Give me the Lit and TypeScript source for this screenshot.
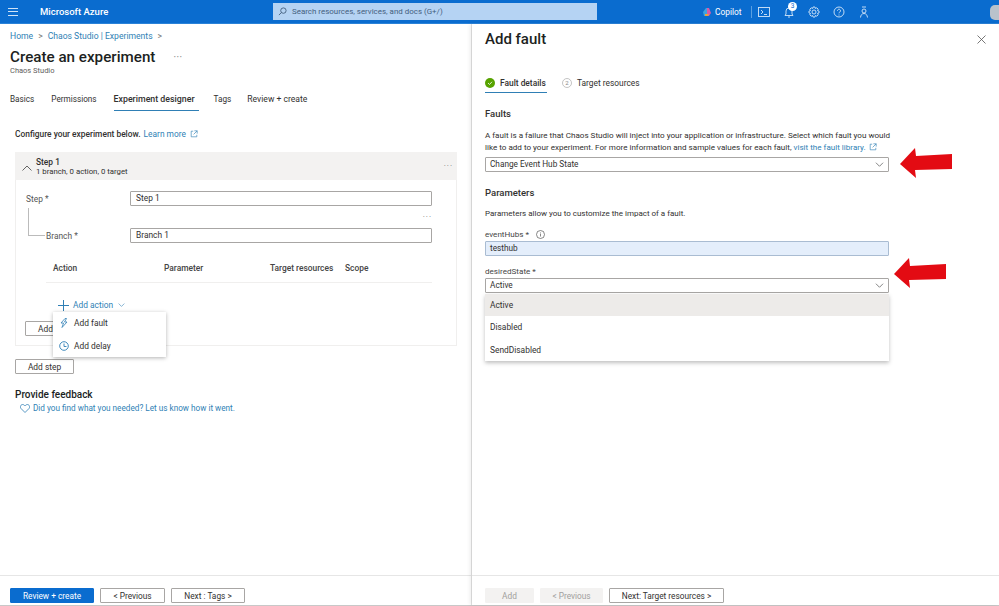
import { LitElement, html, css, svg } from "lit";
import { customElement } from "lit/decorators.js";

const ext = html`<svg class="ext" viewBox="0 0 10 10" fill="none" stroke="#2f7fb5" stroke-width=".8"><path d="M4 1.5H1.5v7h7V6M5.5 1h3.5v3.500M9 1 4.500 5.500"/></svg>`;
const chev = html`<svg class="chev" viewBox="0 0 12 7" fill="none" stroke="#555" stroke-width="1"><path d="M1 1l5 5 5-5"/></svg>`;
const arrow = svg`<path d="M0 16 15 0l1 8 36-2v15l-37 1 1 8z" fill="#e30b13"/>`;

@customElement("app-root")
export class AppRoot extends LitElement {
  static styles = css`
    :host { display: block; width: 999px; height: 606px; overflow: hidden; position: relative; background: #fff;
      font-family: Roboto, "Noto Sans", sans-serif; font-size: 8.4px; color: #323130; }
    * { box-sizing: border-box; }
    .top { height: 24px; background: #0a6ccf; border-bottom: 1px solid #2a82d8; display: flex; align-items: center; color: #fff; }
    .burger { width: 10px; height: 8px; margin-left: 8px; border-top: 1px solid #cfe3f7; border-bottom: 1px solid #cfe3f7; position: relative; }
    .burger i { display: block; height: 1px; background: #cfe3f7; margin-top: 2.500px; }
    .brand { margin-left: 22px; width: 233px; font-size: 9.5px; font-weight: 500; }
    .search { width: 324px; height: 17px; background: #b5d3f3; display: flex; align-items: center; gap: 5px; padding-left: 5px; color: #44607e; font-size: 7.950px; }
    .search svg { width: 9px; height: 9px; }
    .tools { margin-left: 105px; display: flex; align-items: center; }
    .copilot { width: 10px; height: 10px; margin-right: 3px; }
    .tools span { width: 28px; }
    .sep { width: 1px; height: 12px; background: #5a9fe0; margin: 0 6px 0 8px; }
    .ti { width: 12px; height: 12px; margin-right: 13px; flex: none; }
    .bell { position: relative; display: flex; }
    .badge { position: absolute; left: 5px; top: -4px; width: 9px; height: 9px; border-radius: 50%; background: #fff; color: #0a6ccf; font-size: 6.500px; line-height: 9px; text-align: center; }
    .avatar { position: absolute; right: 0; top: 5px; width: 9px; height: 15px; background: #b9c2cb; border-radius: 5px 0 0 5px; }

    .main { display: flex; height: 582px; border-bottom: 1px solid #c8c8c8; }
    .left { width: 472px; display: flex; flex-direction: column; border-right: 1px solid #e3e3e3; }
    .lbody { flex: 1; padding: 6px 0 0 10px; position: relative; }
    .crumb { height: 12px; line-height: 12px; color: #2f7fb5; display: flex; gap: 5px; font-size: 8.600px; }
    .crumb em { font-style: normal; color: #777; }
    .title { display: flex; align-items: center; margin-top: 5px; height: 20px; font-size: 15.200px; font-weight: 500; color: #201f1e; }
    .title i { font-style: normal; font-size: 9px; color: #888; margin-left: 18px; letter-spacing: .5px; }
    .sub { font-size: 7.500px; color: #605e5c; line-height: 10px; margin-top: -1px; }
    .tabs { display: flex; margin-top: 18px; height: 21px; font-size: 8.200px; }
    .tabs div { line-height: 11px; margin-right: 17px; white-space: nowrap; }
    .tabs .on { font-weight: 500; border-bottom: 1px solid #2f7fb5; height: 17px; width: 85px; margin-right: 15px; font-size: 8.800px; }
    .tabs .last { font-size: 8.600px; margin: 0; }
    .tabs .tag { margin-right: 16px; }
    .intro { margin: 13px 0 0 5px; height: 12px; line-height: 12px; font-weight: 500; display: flex; align-items: center; gap: 3px; }
    a { color: #2f7fb5; font-weight: 400; }
    .ext { width: 8px; height: 8px; margin-left: 1px; vertical-align: -1px; }
    .card { margin: 12px 0 0 5px; width: 442px; height: 194px; border: 1px solid #f0efee; border-top: none; }
    .chead { height: 28px; background: #f3f2f1; display: flex; align-items: center; margin: 0 -1px; padding: 3px 0 0 7px; position: relative; }
    .chead svg { width: 10px; height: 6px; margin-right: 4px; }
    .chead b { display: block; font-weight: 500; line-height: 9px; }
    .chead small { display: block; font-size: 7.800px; line-height: 10px; }
    .dots { color: #777; letter-spacing: 1px; font-size: 8px; line-height: 8px; }
    .chead .dots { position: absolute; right: 4px; top: 10px; }
    .row { display: flex; align-items: center; height: 15px; }
    .flabel { width: 114px; padding-left: 10px; margin-top: 1px; color: #555; }
    .flabel.in { padding-left: 30px; }
    .tb { width: 302px; height: 15px; border: 1px solid #a8a6a4; border-radius: 1px; padding-left: 5px; line-height: 13px; }
    .r1 { margin-top: 11px; }
    .r2 { margin-top: 22px; position: relative; }
    .tree { position: absolute; left: 12px; top: -20px; width: 17px; height: 28px; border-left: 1px solid #bbb; border-bottom: 1px solid #bbb; }
    .dots2 { position: absolute; right: 24px; top: -15px; }
    .thead { display: grid; grid-template-columns: 111px 106px 75px 1fr; margin: 20px 24px 0 30px; padding: 0 0 8px 7px; border-bottom: 1px solid #f0efee; font-weight: 500; line-height: 11px; color: #444; }
    .addact { display: flex; align-items: center; margin: 16px 0 0 42px; height: 12px; color: #2f7fb5; }
    .addact svg { width: 11px; height: 11px; margin-right: 4px; }
    .addact .chev { width: 7px; height: 4px; margin: 0 0 0 5px; }
    .btn { display: flex; align-items: center; justify-content: center; height: 15px; border: 1px solid #a8a6a4; border-radius: 1px; background: #fff; color: #323130; white-space: nowrap; }
    .addb { width: 60px; margin: 10px 0 0 9px; justify-content: flex-start; padding-left: 12px; }
    .adds { width: 59px; margin: 13px 0 0 5px; }
    .menu { position: absolute; left: 53px; top: 288px; width: 113px; height: 45px; background: #fff; box-shadow: 0 1px 4px rgba(0,0,0,.3); display: flex; flex-direction: column; }
    .menu div { flex: 1; display: flex; align-items: center; padding-left: 6px; gap: 5px; }
    .menu svg { width: 10px; height: 10px; }
    .fb { margin: 14px 0 0 5px; font-size: 10px; font-weight: 500; line-height: 13px; color: #201f1e; }
    .fbl { margin: 1px 0 0 10px; display: flex; align-items: center; gap: 3px; line-height: 12px; color: #2f7fb5; font-size: 8.200px; }
    .fbl svg { width: 10px; height: 9px; }
    .foot { height: 30px; border-top: 1px solid #e6e6e6; display: flex; gap: 6px; padding: 12px 0 0 10px; font-size: 8.300px; }
    .foot .btn { height: 15px; }
    .pri { background: #0a6ccf; border-color: #0a6ccf; color: #fff; }
    .dis { background: #f3f2f1; border-color: #f3f2f1; color: #a19f9d; }

    .right { flex: 1; display: flex; flex-direction: column; position: relative; box-shadow: -2px 0 4px rgba(0,0,0,.08); }
    .rbody { flex: 1; padding: 5px 0 0 13px; position: relative; }
    .rtitle { font-size: 15px; font-weight: 500; line-height: 20px; color: #201f1e; }
    .close { position: absolute; right: 13px; top: 11px; width: 9px; height: 9px; }
    .steps { display: flex; margin-top: 28px; height: 16px; }
    .st { display: flex; align-items: flex-start; gap: 5px; line-height: 12px; height: 16px; white-space: nowrap; }
    .st.on { width: 62px; border-bottom: 1px solid #2f7fb5; font-weight: 500; margin-right: 15px; }
    .st svg { width: 10px; height: 10px; flex: none; margin-top: 1px; }
    h3 { margin: 0; font-size: 9.500px; font-weight: 500; line-height: 13px; color: #323130; }
    .h1 { margin-top: 14px; }
    .p { width: 410px; line-height: 12px; margin-top: 10px; white-space: nowrap; font-size: 8.080px; }
    .sel { width: 404px; height: 15px; border: 1px solid #a8a6a4; border-radius: 1px; padding: 0 4px; display: flex; align-items: center; justify-content: space-between; line-height: 13px; font-size: 8.250px; }
    .chev { width: 9px; height: 5px; }
    .h2 { margin-top: 14px; }
    .p2 { margin-top: 9px; line-height: 12px; font-size: 8px; }
    .lbl { display: flex; align-items: center; gap: 7px; line-height: 12px; height: 12px; color: #444; margin-bottom: 1px; font-size: 8.100px; }
    .lbl svg { width: 9px; height: 9px; }
    .fill { background: #e4eefb; border-color: #a9bcd2; }
    .drop { position: absolute; left: 13px; top: 270px; width: 404px; background: #fff; box-shadow: 0 2px 4px rgba(0,0,0,.25); }
    .drop div { height: 22.300px; line-height: 22px; padding-left: 5px; }
    .drop .cur { background: #edebe9; }
    .arrow { position: absolute; width: 52px; height: 30px; }
    .rfoot { padding-left: 13px; }
  `;
  render() {
    return html`
      <div class="top">
        <div class="burger"><i></i></div>
        <div class="brand">Microsoft Azure</div>
        <div class="search">
          <svg viewBox="0 0 10 10" fill="none" stroke="#44607e"><circle cx="6" cy="4" r="3"/><path d="M4 6 1 9"/></svg>
          Search resources, services, and docs (G+/)
        </div>
        <div class="tools">
          <svg class="copilot" viewBox="0 0 10 10"><path d="M1 5 4 1h2L5 9H2z" fill="#3ea3e0"/><path d="M5 1h2l2 5-2 3H5z" fill="#d85aa8"/><path d="M3 7h4l-1 2H3z" fill="#e8a13c"/></svg>
          <span>Copilot</span>
          <div class="sep"></div>
          <svg class="ti" viewBox="0 0 12 12" fill="none" stroke="#d5e6f8" stroke-width=".9"><rect x=".5" y="1.500" width="11" height="9"/><path d="M3 4l2 2-2 2M6 8.500h3"/></svg>
          <div class="bell">
            <svg class="ti" viewBox="0 0 12 12" fill="none" stroke="#d5e6f8" stroke-width=".9"><path d="M2 9.500h8L9 8V5a3 3 0 0 0-6 0v3zM5 11h2"/></svg>
            <div class="badge">3</div>
          </div>
          <svg class="ti" viewBox="0 0 12 12" fill="none" stroke="#d5e6f8" stroke-width=".9"><circle cx="6" cy="6" r="2"/><path d="M5 1h2l.4 1.500 1.400-.7 1.400 1.400-.7 1.400L11 5v2l-1.500.4.7 1.400-1.400 1.400-1.400-.7L7 11H5l-.4-1.500-1.400.7-1.400-1.400.7-1.400L1 7V5l1.500-.4-.7-1.400 1.400-1.400 1.400.7z"/></svg>
          <svg class="ti" viewBox="0 0 12 12" fill="none" stroke="#d5e6f8" stroke-width=".9"><circle cx="6" cy="6" r="5"/><path d="M4.500 4.700a1.500 1.500 0 1 1 2.300 1.300c-.6.400-.8.700-.8 1.300M6 8.500v1"/></svg>
          <svg class="ti" viewBox="0 0 12 12" fill="none" stroke="#d5e6f8" stroke-width=".9"><path d="M4 1h4M6 3a2 2 0 1 1 0 4 2 2 0 0 1 0-4zM2.500 11.500c.3-2.500 1.500-4 3.500-4s3.200 1.500 3.500 4"/></svg>
        </div>
        <div class="avatar"></div>
      </div>
      <div class="main">
        <div class="left">
          <div class="lbody">
            <div class="crumb"><span>Home</span><em>&gt;</em><span>Chaos Studio | Experiments</span><em>&gt;</em></div>
            <div class="title">Create an experiment<i>···</i></div>
            <div class="sub">Chaos Studio</div>
            <div class="tabs">
              <div>Basics</div><div>Permissions</div><div class="on">Experiment designer</div><div class="tag">Tags</div><div class="last">Review + create</div>
            </div>
            <div class="intro">Configure your experiment below. <a>Learn more</a>${ext}</div>
            <div class="card">
              <div class="chead">
                <svg viewBox="0 0 10 6" fill="none" stroke="#555" stroke-width=".9"><path d="M.5 5.500 5 1l4.500 4.500"/></svg>
                <div><b>Step 1</b><small>1 branch, 0 action, 0 target</small></div>
                <span class="dots">···</span>
              </div>
              <div class="row r1"><div class="flabel">Step *</div><div class="tb">Step 1</div></div>
              <div class="row r2">
                <div class="tree"></div><span class="dots dots2">···</span>
                <div class="flabel in">Branch *</div><div class="tb">Branch 1</div>
              </div>
              <div class="thead"><div>Action</div><div>Parameter</div><div>Target resources</div><div>Scope</div></div>
              <div class="addact">
                <svg viewBox="0 0 11 11" fill="none" stroke="#2f7fb5"><path d="M5.500 0v11M0 5.500h11"/></svg>Add action
                <svg class="chev" viewBox="0 0 12 7" fill="none" stroke="#2f7fb5"><path d="M1 1l5 5 5-5"/></svg>
              </div>
              <div class="btn addb">Add</div>
            </div>
            <div class="btn adds">Add step</div>
            <div class="fb">Provide feedback</div>
            <div class="fbl">
              <svg viewBox="0 0 10 9" fill="none" stroke="#2f7fb5" stroke-width=".8"><path d="M5 8.500 1 4.500C-.5 2.500 1 .5 2.700.5 4 .5 5 2 5 2S6 .5 7.300.5C9 .5 10.500 2.500 9 4.500z"/></svg>
              Did you find what you needed? Let us know how it went.
            </div>
            <div class="menu">
              <div><svg viewBox="0 0 10 10" fill="none" stroke="#2f7fb5" stroke-width=".8"><path d="M6 .5 2 5h2.500L3 9.500 8 4H5.500L7.500.5z"/></svg>Add fault</div>
              <div><svg viewBox="0 0 10 10" fill="none" stroke="#2f7fb5" stroke-width=".9"><circle cx="5" cy="5" r="4.300"/><path d="M5 2.500V5.500H7.500"/></svg>Add delay</div>
            </div>
          </div>
          <div class="foot">
            <div class="btn pri" style="width:84px">Review + create</div>
            <div class="btn" style="width:65px">&lt; Previous</div>
            <div class="btn" style="width:74px">Next : Tags &gt;</div>
          </div>
        </div>
        <div class="right">
          <div class="rbody">
            <div class="rtitle">Add fault</div>
            <svg class="close" viewBox="0 0 9 9" stroke="#555" stroke-width=".8"><path d="M.5.5l8 8M8.500.5l-8 8"/></svg>
            <div class="steps">
              <div class="st on"><svg viewBox="0 0 10 10"><circle cx="5" cy="5" r="5" fill="#57a300"/><path d="M3 5l1.500 1.500L7 3.800" fill="none" stroke="#fff" stroke-width=".8"/></svg>Fault details</div>
              <div class="st"><svg viewBox="0 0 10 10"><circle cx="5" cy="5" r="4.500" fill="none" stroke="#aaa" stroke-width=".7"/><text x="5" y="7" font-size="6" text-anchor="middle" fill="#888">2</text></svg>Target resources</div>
            </div>
            <h3 class="h1">Faults</h3>
            <div class="p">A fault is a failure that Chaos Studio will inject into your application or infrastructure. Select which fault you would<br>like to add to your experiment. For more information and sample values for each fault, <a>visit the fault library.</a> ${ext}</div>
            <div class="sel" style="margin-top:3px">Change Event Hub State ${chev}</div>
            <h3 class="h2">Parameters</h3>
            <div class="p2">Parameters allow you to customize the impact of a fault.</div>
            <div class="lbl" style="margin-top:8px">eventHubs *
              <svg viewBox="0 0 9 9" fill="none" stroke="#555" stroke-width=".7"><circle cx="4.500" cy="4.500" r="4"/><path d="M4.500 4v2.500M4.500 2.500v1"/></svg>
            </div>
            <div class="sel fill">testhub</div>
            <div class="lbl" style="margin-top:9px">desiredState *</div>
            <div class="sel">Active ${chev}</div>
            <div class="drop"><div class="cur">Active</div><div>Disabled</div><div>SendDisabled</div></div>
            <svg class="arrow" style="left:428px;top:124px" viewBox="0 0 52 30">${arrow}</svg>
            <svg class="arrow" style="left:422px;top:234px" viewBox="0 0 52 30">${arrow}</svg>
          </div>
          <div class="foot rfoot">
            <div class="btn dis" style="width:49px">Add</div>
            <div class="btn dis" style="width:63px">&lt; Previous</div>
            <div class="btn" style="width:115px">Next: Target resources &gt;</div>
          </div>
        </div>
      </div>
    `;
  }
}
